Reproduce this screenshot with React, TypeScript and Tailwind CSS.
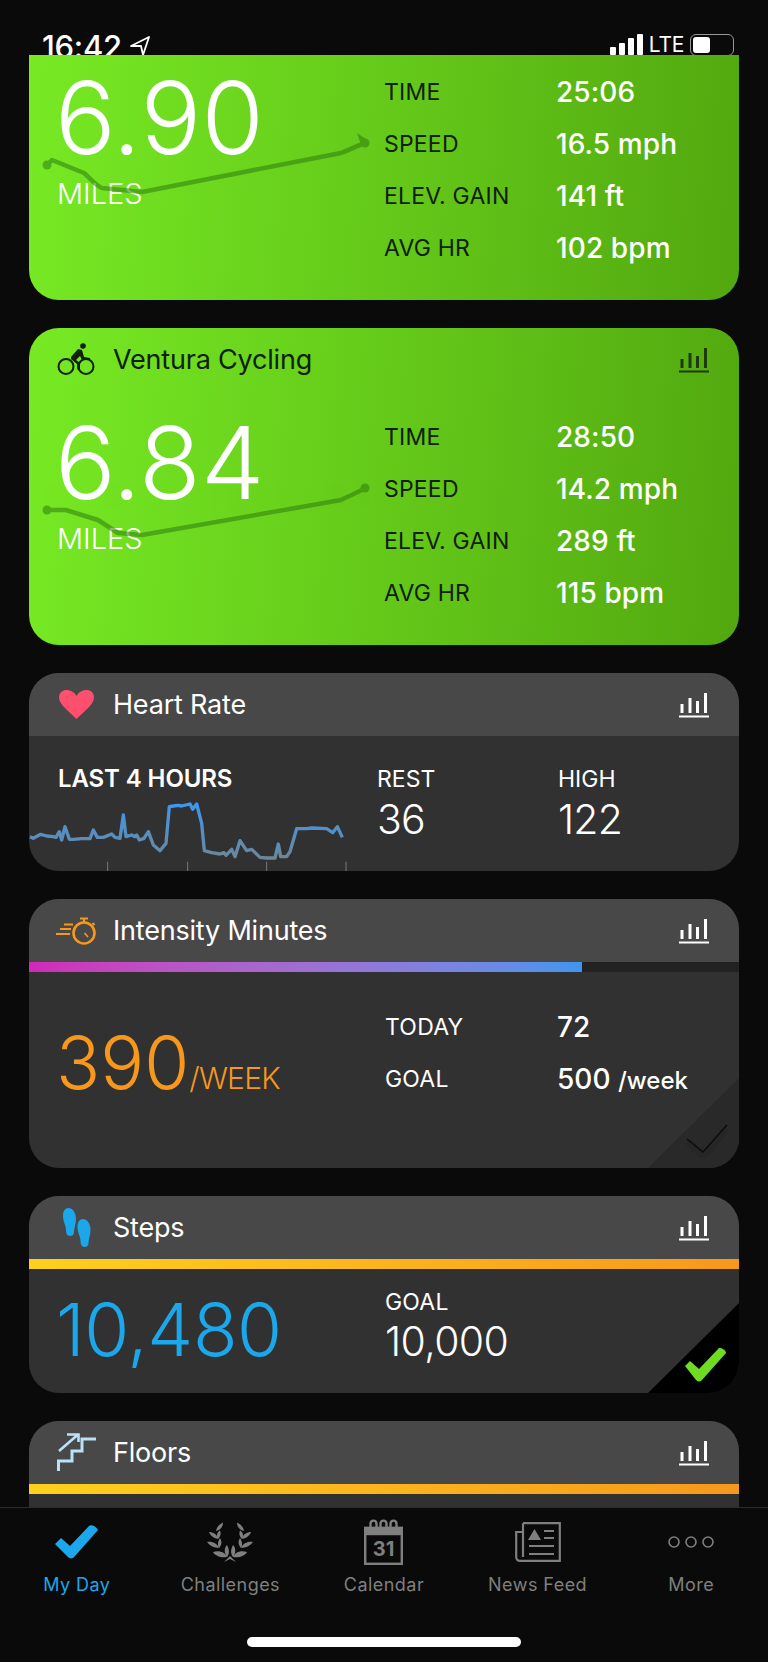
import type { ReactNode } from 'react';

const FONT = "font-['Inter','Liberation_Sans',sans-serif]";

function ChartIcon({ dark = false }: { dark?: boolean }) {
  const color = dark ? '#1d3a0c' : '#ffffff';
  return (
    <svg width="30" height="26" viewBox="0 0 30 26" fill={color} className="shrink-0">
      <rect x="1.5" y="12" width="3" height="9" />
      <rect x="9.5" y="6" width="3" height="15" />
      <rect x="17" y="9" width="3" height="12" />
      <rect x="25" y="1" width="3" height="20" />
      <rect x="0" y="23.5" width="30" height="2" />
    </svg>
  );
}

function BikeIcon() {
  return (
    <svg width="38" height="33" viewBox="0 0 38 33" fill="none" stroke="#10200a" strokeWidth="2">
      <circle cx="9" cy="23.5" r="7.5" />
      <circle cx="29" cy="23.5" r="7.5" />
      <circle cx="26" cy="3" r="2.8" fill="#10200a" stroke="none" />
      <path d="M14 14 L21 6 L25 7 L27 14 L33 15 L33 17 L25 17 L23 13 L19 17 L23 20 L23 27 L20.5 27 L20 21 L14 16 Z" fill="#10200a" stroke="none" />
    </svg>
  );
}

function HeartIcon() {
  return (
    <svg width="35" height="29" viewBox="0 0 35 29" fill="#ff4f6e">
      <path d="M17.5 29 C12 23 0 15 0 7.5 C0 2.5 3.5 0 7.5 0 C12 0 15.5 2.5 17.5 6 C19.5 2.5 23 0 27.5 0 C31.5 0 35 2.5 35 7.5 C35 15 23 23 17.5 29 Z" />
    </svg>
  );
}

function TimerIcon() {
  return (
    <svg width="40" height="28" viewBox="0 0 40 28" fill="none" stroke="#f7981c" strokeWidth="2.2">
      <circle cx="28" cy="16" r="10.5" strokeWidth="2.6" />
      <path d="M28 5 V2 M24 1.5 H32 M36.5 6 L38.5 8" />
      <path d="M28.5 16 L32 20" strokeWidth="1.6" />
      <path d="M8 7.5 H17 M4 12 H15 M0 17 H14" />
    </svg>
  );
}

function StepsIcon() {
  const foot = 'M6.5 0 C11 0 14 5 14 11 C14 16 12 20 12 24 C12 27 10 28 8 28 C5 28 4 25 4 22 C4 17 1 14 1 8 C1 3 3 0 6.5 0 Z';
  return (
    <svg width="29" height="39" viewBox="0 0 29 39" fill="#1ba7ea">
      <path d={foot} />
      <path d={foot} transform="translate(14.5 11)" />
    </svg>
  );
}

function StairsIcon() {
  return (
    <svg width="39" height="39" viewBox="0 0 39 39" fill="none" stroke="#b9e2f6" strokeWidth="3">
      <path d="M1.5 38 V28 H15 V18 H25 V6 H39" />
      <path d="M2 18 L20.5 2 M10 1.5 H21.5 V9" strokeWidth="2.6" />
    </svg>
  );
}

function CardHeader({ icon, title, dark = false }: { icon: ReactNode; title: string; dark?: boolean }) {
  return (
    <div className={`h-[63px] flex items-center justify-between pr-[30px] ${dark ? '' : 'bg-[#484848]'}`}>
      <div className="flex items-center">
        <div className="w-[84px] flex justify-center pl-[10px]">{icon}</div>
        <span className={`text-[27px] leading-none tracking-[-0.2px] ${dark ? 'text-[#10200a]' : 'text-white'}`}>{title}</span>
      </div>
      <ChartIcon dark={dark} />
    </div>
  );
}

function RoutePath({ d, start, end, extra }: { d: string; start: [number, number]; end: [number, number]; extra?: string }) {
  return (
    <svg className="absolute left-0 top-0 pointer-events-none overflow-visible" width="400" height="90" viewBox="0 0 400 90" fill="none">
      <g opacity="0.55">
        <path d={d} stroke="#2f7d10" strokeWidth="4.5" strokeLinejoin="round" strokeLinecap="round" />
        <circle cx={start[0]} cy={start[1]} r="4.5" fill="#2f7d10" />
        <circle cx={end[0]} cy={end[1]} r="4.5" fill="#2f7d10" />
        {extra && <path d={extra} fill="#2f7d10" />}
      </g>
    </svg>
  );
}

type ActivityProps = {
  miles: string;
  rows: [string, string][];
  route: string;
  start: [number, number];
  end: [number, number];
  extra?: string;
};

function ActivityBody({ miles, rows, route, start, end, extra }: ActivityProps) {
  return (
    <div className="flex h-[226px]">
      <div className="relative w-[355px] pl-[29px] shrink-0">
        <div className="text-white text-[101px] leading-[99px] font-light tracking-[0.2px] mt-[22px] -ml-[3px]">{miles}</div>
        <div className="text-white text-[29px] leading-none font-light tracking-[0px] -ml-[1px] mt-[12px]">MILES</div>
        <div className="absolute left-0 top-[95px]">
          <RoutePath d={route} start={start} end={end} extra={extra} />
        </div>
      </div>
      <div className="grid grid-cols-[172px_1fr] auto-rows-[52px] items-center pt-[20px] content-start">
        {rows.map(([label, value]) => (
          <div key={label} className="contents">
            <div className="text-[#10200a] text-[23px] tracking-[0.2px]">{label}</div>
            <div className="text-white text-[28px] font-medium tracking-[0.1px]">{value}</div>
          </div>
        ))}
      </div>
    </div>
  );
}

const HR_POINTS =
  '30,170 40,175 62,163 80,168 100,170 108,172 118,155 125,180 135,140 148,178 160,178 185,176 210,176 220,150 232,172 250,172 275,162 285,172 300,175 310,105 318,170 335,165 345,170 350,165 358,180 372,175 385,155 400,195 420,212 438,190 448,80 460,78 475,76 485,78 510,72 518,88 530,72 545,130 553,212 575,218 600,222 612,218 618,226 635,208 645,230 660,182 680,212 695,208 720,232 740,234 765,234 775,192 782,230 800,230 810,215 830,146 860,146 875,144 920,146 938,158 952,140 967,172';

function HeartChart() {
  return (
    <svg className="absolute left-[-9px] top-[107px]" width="340" height="100" viewBox="0 0 1020 300" fill="none">
      <defs>
        <linearGradient id="hr" gradientUnits="userSpaceOnUse" x1="0" y1="70" x2="0" y2="235">
          <stop offset="0" stopColor="#3d97f2" />
          <stop offset="1" stopColor="#6c8798" />
        </linearGradient>
      </defs>
      <polyline points={HR_POINTS} stroke="url(#hr)" strokeWidth="10" strokeLinejoin="round" />
      {[263, 503, 740, 978].map((x) => (
        <line key={x} x1={x} x2={x} y1="245" y2="275" stroke="#787878" strokeWidth="3" />
      ))}
    </svg>
  );
}

function Corner({ achieved }: { achieved: boolean }) {
  return (
    <div className={`absolute right-0 bottom-0 w-[91px] h-[90px] ${achieved ? 'bg-black' : 'bg-[#292929]'} [clip-path:polygon(100%_0,100%_100%,0_100%)]`}>
      {achieved ? (
        <svg className="absolute left-[37px] top-[45px]" width="44" height="34" viewBox="0 0 44 34" fill="#6fdc24">
          <path d="M0 18 L5 13 L14 21 L34 0 C37 0 41 2 41 5 L17 32 C15 34 13 34 11 32 Z" />
        </svg>
      ) : (
        <svg className="absolute left-[38px] top-[46px]" width="44" height="34" viewBox="0 0 44 34" fill="none">
          <path d="M1 17 L17 32 L41 5" stroke="#262626" strokeWidth="7" />
          <path d="M1 15 L17 28 L41 1" stroke="#0c0c0c" strokeWidth="1.5" />
        </svg>
      )}
    </div>
  );
}

function Laurel() {
  const leaves = (
    <g fill="#7f7f7f">
      <path d="M9 9 C10 4 13 2 16 0.5 C16 4 14 8 9 9 Z" />
      <path d="M11 17 C6 16 3 13 2 10 C6 10 10 12 11 17 Z" />
      <path d="M11 17 C14 14 14 11 13 8.5 C10 10 9 14 11 17 Z" />
      <path d="M12 26 C7 26 2 23 0 20 C5 19 10 21 12 26 Z" />
      <path d="M12 26 C15 23 15 19 13 16 C11 19 10 23 12 26 Z" />
      <path d="M20 35 C14 36 8 34 6 30 C12 28 18 30 20 35 Z" />
      <path d="M20 35 C23 31 22 27 20 23 C17 26 17 31 20 35 Z" />
    </g>
  );
  return (
    <svg width="46" height="40" viewBox="0 0 46 40">
      {leaves}
      <g transform="matrix(-1 0 0 1 46 0)">{leaves}</g>
      <path d="M17 40 L23 34 L29 40 L23 37 Z" fill="#7f7f7f" />
    </svg>
  );
}

function TabIcon({ name }: { name: string }) {
  if (name === 'My Day')
    return (
      <svg width="43" height="34" viewBox="0 0 43 34" fill="#1ba7ea">
        <path d="M0 19 L6 13 L15 21 L34 1 C36 -1 41 1 43 5 L20 31 C18 34 15 34 13 32 Z" />
      </svg>
    );
  if (name === 'Challenges') return <Laurel />;
  if (name === 'Calendar')
    return (
      <svg width="39" height="46" viewBox="0 0 39 46" fill="none" stroke="#7f7f7f" strokeWidth="2.4">
        <rect x="1.2" y="9" width="36.6" height="35.8" />
        <rect x="1.2" y="9" width="36.6" height="6" fill="#7f7f7f" />
        <path d="M6.5 10 V5 C6.5 0.5 12.5 0.5 12.5 5 V10 M16.5 10 V5 C16.5 0.5 22.5 0.5 22.5 5 V10 M26.5 10 V5 C26.5 0.5 32.5 0.5 32.5 5 V10" />
        <text x="19.5" y="37" textAnchor="middle" fill="#7f7f7f" stroke="none" fontSize="20" fontWeight="700" fontFamily="Inter, sans-serif">31</text>
      </svg>
    );
  if (name === 'News Feed')
    return (
      <svg width="46" height="40" viewBox="0 0 46 40" fill="none" stroke="#7f7f7f" strokeWidth="2.2">
        <path d="M8 1.2 H44.8 V38.8 H5 C2.5 38.8 1.2 37 1.2 35 V10 H8" />
        <path d="M8 1.2 V35" />
        <path d="M19.5 7 L26 18 H13 Z" fill="#7f7f7f" stroke="none" />
        <path d="M29 9 H39 M29 16 H39 M14 24 H39 M14 32 H39" />
      </svg>
    );
  return (
    <svg width="46" height="12" viewBox="0 0 46 12" fill="none" stroke="#7f7f7f" strokeWidth="1.6">
      <circle cx="6" cy="6" r="5" />
      <circle cx="23" cy="6" r="5" />
      <circle cx="40" cy="6" r="5" />
    </svg>
  );
}

const TABS = ['My Day', 'Challenges', 'Calendar', 'News Feed', 'More'];

export default function App() {
  return (
    <div className={`w-[768px] h-[1662px] bg-[#0a0a0a] flex flex-col overflow-hidden ${FONT}`}>
      <div className="h-[1507px] overflow-hidden shrink-0">
        {/* status bar, the list scrolls up over its lower edge */}
        <div className="h-[55px] overflow-hidden flex justify-between pl-[42px] pr-[34px] pt-[31px] text-white">
          <div className="flex items-start gap-[8px]">
            <span className="text-[31px] leading-[31px] font-medium tracking-[-0.3px]">16:42</span>
            <svg width="20" height="20" viewBox="0 0 20 20" fill="none" stroke="#fff" strokeWidth="1.8" className="mt-[5px]">
              <path d="M1 10 L19 1 L13 19 L11 10 Z" strokeLinejoin="round" />
            </svg>
          </div>
          <div className="flex items-start gap-[6px]">
            <div className="flex items-end gap-[3px] h-[21px] mt-[3px]">
              <div className="w-[6px] h-[8px] bg-white rounded-[1px]" />
              <div className="w-[6px] h-[12px] bg-white rounded-[1px]" />
              <div className="w-[6px] h-[17px] bg-white rounded-[1px]" />
              <div className="w-[6px] h-[21px] bg-white rounded-[1px]" />
            </div>
            <span className="text-[21px] leading-[26px] tracking-[-0.3px] mt-[1px]">LTE</span>
            <div className="w-[44px] h-[22px] rounded-[6px] border border-[#999] p-[2px] mt-[3px]">
              <div className="w-[17px] h-full bg-white rounded-[3px]" />
            </div>
          </div>
        </div>

        <div className="px-[29px] flex flex-col gap-[28px]">
          <div className="h-[245px] rounded-b-[30px] bg-linear-[95deg] from-[#77ea24] to-[#52a80f] overflow-hidden">
            <div className="-mt-[9px]">
              <ActivityBody
                miles="6.90"
                route="M18 24 L23 19 L55 32 C62 38 66 44 73 47 L113 51 L312 12 C320 9 330 4 336 2"
                start={[18, 24]}
                end={[336, 2]}
                extra="M328 -8 L340 0 L332 4 Z"
                rows={[
                  ['TIME', '25:06'],
                  ['SPEED', '16.5 mph'],
                  ['ELEV. GAIN', '141 ft'],
                  ['AVG HR', '102 bpm'],
                ]}
              />
            </div>
          </div>

          <div className="h-[317px] rounded-[30px] bg-linear-[95deg] from-[#77ea24] to-[#52a80f] overflow-hidden">
            <CardHeader icon={<BikeIcon />} title="Ventura Cycling" dark />
            <ActivityBody
              miles="6.84"
              route="M18 24 L37 24 L69 34 L89 47 L113 49 L312 14 C320 10 330 6 336 2"
              start={[18, 24]}
              end={[336, 2]}
              rows={[
                ['TIME', '28:50'],
                ['SPEED', '14.2 mph'],
                ['ELEV. GAIN', '289 ft'],
                ['AVG HR', '115 bpm'],
              ]}
            />
          </div>

          <div className="relative h-[198px] rounded-[30px] bg-[#313131] overflow-hidden">
            <CardHeader icon={<HeartIcon />} title="Heart Rate" />
            <HeartChart />
            <div className="flex text-white">
              <div className="w-[348px] pl-[29px] pt-[29px] text-[24px] leading-[28px] font-semibold tracking-[-0.1px]">LAST 4 HOURS</div>
              <div className="w-[181px] pt-[29px]">
                <div className="text-[23px] leading-[28px]">REST</div>
                <div className="text-[41px] leading-[52px] font-light tracking-[-0.8px]">36</div>
              </div>
              <div className="pt-[29px]">
                <div className="text-[23px] leading-[28px]">HIGH</div>
                <div className="text-[41px] leading-[52px] font-light tracking-[-0.8px]">122</div>
              </div>
            </div>
          </div>

          <div className="relative h-[269px] rounded-[30px] bg-[#313131] overflow-hidden">
            <CardHeader icon={<TimerIcon />} title="Intensity Minutes" />
            <div className="h-[10px] bg-[#222222]">
              <div className="w-[553px] h-full bg-linear-to-r from-[#d028b8] to-[#3f95ee]" />
            </div>
            <div className="flex">
              <div className="w-[356px] pl-[29px] pt-[47px] flex items-baseline text-[#f7981c]">
                <span className="text-[73px] leading-[88px] font-light tracking-[0px] -ml-[2px]">390</span>
                <span className="text-[30px] font-light tracking-[-0.8px]">/WEEK</span>
              </div>
              <div className="grid grid-cols-[172px_1fr] auto-rows-[52px] items-center pt-[29px] content-start text-white">
                <div className="text-[23px] tracking-[0.2px]">TODAY</div>
                <div className="text-[28px] font-medium">72</div>
                <div className="text-[23px] tracking-[0.2px]">GOAL</div>
                <div className="text-[28px] font-medium">
                  500 <span className="text-[24px]">/week</span>
                </div>
              </div>
            </div>
            <Corner achieved={false} />
          </div>

          <div className="relative h-[197px] rounded-[30px] bg-[#313131] overflow-hidden">
            <CardHeader icon={<StepsIcon />} title="Steps" />
            <div className="h-[10px] bg-linear-to-r from-[#fdd01e] to-[#f7981c]" />
            <div className="flex">
              <div className="w-[356px] pl-[29px] pt-[17px] text-[#1ba7ea] text-[73px] leading-[88px] font-light tracking-[-0.4px]">
                <span className="-ml-[2px]">10,480</span>
              </div>
              <div className="pt-[19px] text-white">
                <div className="text-[23px] leading-[28px] tracking-[0.2px]">GOAL</div>
                <div className="text-[41px] leading-[50px] font-light tracking-[-0.6px]">10,000</div>
              </div>
            </div>
            <Corner achieved />
          </div>

          <div className="rounded-t-[30px] bg-[#313131] overflow-hidden h-[120px]">
            <CardHeader icon={<StairsIcon />} title="Floors" />
            <div className="h-[10px] bg-linear-to-r from-[#fdd01e] to-[#f7981c]" />
          </div>
        </div>
      </div>

      {/* tab bar */}
      <div className="flex-1 border-t border-[#2b2b2b] bg-[#0a0a0a] pt-[11px] flex flex-col">
        <div className="flex">
          {TABS.map((tab, i) => (
            <div key={tab} className="flex-1 flex flex-col items-center">
              <div className="h-[46px] flex items-center justify-center">
                <TabIcon name={tab} />
              </div>
              <span className={`mt-[9px] text-[18px] leading-[22px] tracking-[0.45px] ${i === 0 ? 'text-[#1ba7ea]' : 'text-[#7f7f7f]'}`}>{tab}</span>
            </div>
          ))}
        </div>
        <div className="w-[274px] h-[10px] rounded-full bg-white self-center mt-[41px]" />
      </div>
    </div>
  );
}
